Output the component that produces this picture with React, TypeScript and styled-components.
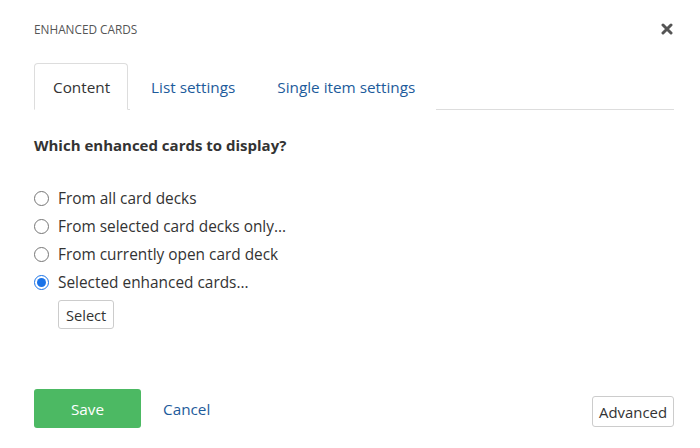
import styled, { createGlobalStyle } from "styled-components";

const GlobalStyle = createGlobalStyle`
	html, body {
		margin: 0;
		padding: 0;
		background: #fff;
	}
	body {
		font-family: "Open Sans", "Liberation Sans", sans-serif;
		color: #333;
	}
`;

const Dialog = styled.div`
	width: 700px;
	height: 448px;
	box-sizing: border-box;
	padding: 19px 26px 0 34px;
	display: flex;
	flex-direction: column;
`;

const Header = styled.div`
	display: flex;
	justify-content: space-between;
	align-items: center;
	height: 20px;
`;

const Title = styled.h1`
	margin: 0;
	font-size: 11.8px;
	font-weight: 400;
	color: #555;
`;

const CloseButton = styled.button`
	border: 0;
	background: none;
	padding: 0;
	width: 14px;
	height: 14px;
	display: flex;
	align-items: center;
	justify-content: center;
	cursor: pointer;
`;

const TabBar = styled.ul`
	list-style: none;
	margin: 24px 0 0;
	padding: 0;
	display: flex;
	border-bottom: 1px solid #ddd;
	height: 46px;
`;

const Tab = styled.li<{ $active?: boolean }>`
	box-sizing: border-box;
	height: 47px;
	padding: 0 ${(p) => (p.$active ? "17px" : "20px")} 0 ${(p) => (p.$active ? "18px" : "20px")};
	margin-right: ${(p) => (p.$active ? "2px" : "0")};
	display: flex;
	align-items: center;
	font-size: 15.3px;
	color: ${(p) => (p.$active ? "#333" : "#1d5b9b")};
	border: 1px solid ${(p) => (p.$active ? "#ddd" : "transparent")};
	border-bottom-color: ${(p) => (p.$active ? "#fff" : "transparent")};
	border-radius: 4px 4px 0 0;
	background: #fff;
`;

const Question = styled.h2`
	margin: 25px 0 0;
	font-size: 15px;
	font-weight: 700;
	color: #333;
`;

const RadioList = styled.div`
	margin-top: 33px;
	display: flex;
	flex-direction: column;
	gap: 8px;
`;

const RadioRow = styled.label`
	display: flex;
	align-items: center;
	gap: 9px;
	height: 20px;
	font-size: 15.4px;
	color: #333;
`;

const RadioDot = styled.span<{ $checked?: boolean }>`
	box-sizing: border-box;
	width: 15px;
	height: 15px;
	border-radius: 50%;
	border: 1px solid ${(p) => (p.$checked ? "#1a73e8" : "#767676")};
	background: #fff;
	display: flex;
	align-items: center;
	justify-content: center;
	&::after {
		content: "";
		display: ${(p) => (p.$checked ? "block" : "none")};
		width: 9px;
		height: 9px;
		border-radius: 50%;
		background: #1a73e8;
	}
`;

const SelectButton = styled.button`
	align-self: flex-start;
	margin: 0 0 0 24px;
	height: 29px;
	padding: 0 7px;
	background: #fff;
	border: 1px solid #ccc;
	border-radius: 3px;
	font-family: inherit;
	font-size: 14.6px;
	color: #333;
`;

const Footer = styled.div`
	margin-top: auto;
	margin-bottom: 20px;
	display: flex;
	align-items: center;
`;

const SaveButton = styled.button`
	width: 107px;
	height: 39px;
	border: 0;
	border-radius: 3px;
	background: #4cb963;
	color: #fff;
	font-family: inherit;
	font-size: 15.3px;
`;

const CancelLink = styled.a`
	margin-left: 22px;
	font-size: 15.3px;
	color: #1d5b9b;
	text-decoration: none;
`;

const AdvancedButton = styled.button`
	margin-left: auto;
	margin-top: 6px;
	height: 31px;
	padding: 0 6px;
	background: #fff;
	border: 1px solid #ccc;
	border-radius: 3px;
	font-family: inherit;
	font-size: 14.9px;
	color: #333;
`;

const OPTIONS = [
	"From all card decks",
	"From selected card decks only...",
	"From currently open card deck",
	"Selected enhanced cards...",
];

const App = () => {
	const selected = 3;
	return (
		<>
			<GlobalStyle />
			<Dialog>
				<Header>
					<Title>ENHANCED CARDS</Title>
					<CloseButton aria-label="Close">
						<svg width="12" height="12" viewBox="0 0 12 12">
							<path d="M2 2 L10 10 M10 2 L2 10" stroke="#555" strokeWidth="3" strokeLinecap="round" />
						</svg>
					</CloseButton>
				</Header>

				<TabBar>
					<Tab $active>Content</Tab>
					<Tab>List settings</Tab>
					<Tab>Single item settings</Tab>
				</TabBar>

				<Question>Which enhanced cards to display?</Question>

				<RadioList>
					{OPTIONS.map((el, index) => (
						<RadioRow key={index}>
							<RadioDot $checked={index === selected} />
							{el}
						</RadioRow>
					))}
					<SelectButton>Select</SelectButton>
				</RadioList>

				<Footer>
					<SaveButton>Save</SaveButton>
					<CancelLink href="#">Cancel</CancelLink>
					<AdvancedButton>Advanced</AdvancedButton>
				</Footer>
			</Dialog>
		</>
	);
};

export default App;
